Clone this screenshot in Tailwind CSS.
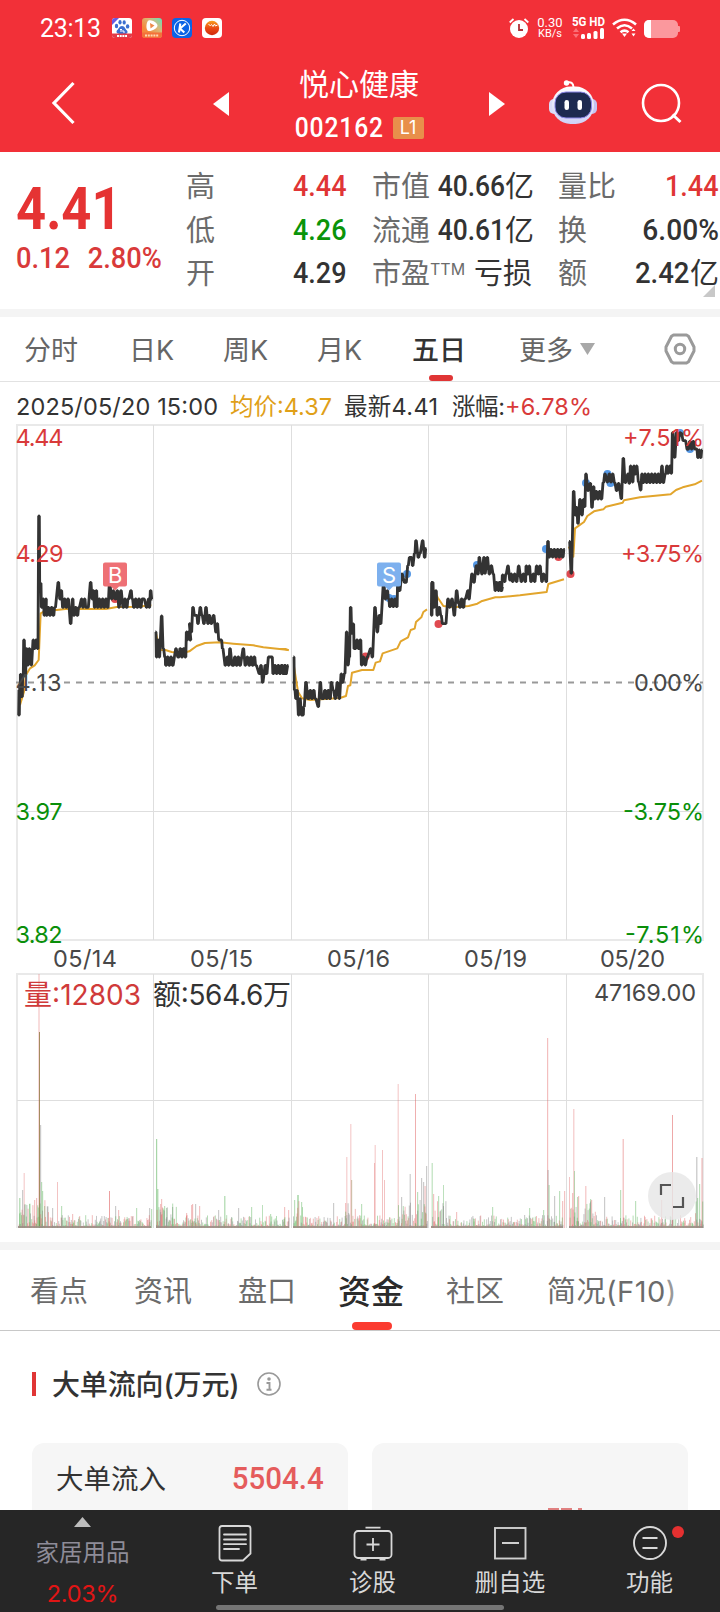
<!DOCTYPE html>
<html lang="zh-CN">
<head>
<meta charset="utf-8">
<title>悦心健康 002162</title>
<script src="https://cdn.jsdelivr.net/npm/@tailwindcss/browser@4"></script>
</head>
<body class="bg-white">
<div class="w-[720px] h-[1612px] overflow-hidden flex flex-col font-['Inter','Noto_Sans_CJK_SC',sans-serif] text-[#333] whitespace-nowrap">

  <!-- status bar -->
  <header class="bg-[#f23038] text-white h-[152px] shrink-0 flex flex-col">
    <div class="h-14 flex items-center pl-[40px] pr-[40px] justify-between">
      <div class="flex items-center">
        <span class="text-[25px] leading-none w-[72px] font-['Roboto'] tracking-[-0.300px]">23:13</span>
        <svg class="w-5 h-5" viewBox="0 0 20 20"><rect width="20" height="20" rx="3" fill="#fff"/><path d="M0 3a3 3 0 0 1 3-3h4L0 7z" fill="#6a5be0"/><g fill="#3b6fd0"><ellipse cx="4.500" cy="8" rx="1.700" ry="2.300"/><ellipse cx="8" cy="4.200" rx="1.600" ry="2.200"/><ellipse cx="12.200" cy="4.400" rx="1.600" ry="2.200"/><ellipse cx="15.600" cy="8.400" rx="1.700" ry="2.200"/><path d="M10 8c3 0 3 3 5 4.500c1.500 2-.5 4-2.500 3.500h-5C5 16 3.800 14 5 12.300C7 11 7 8 10 8z"/></g><path d="M8 11.500h2M9 11v3M11 12v2h2" stroke="#fff" fill="none"/><path d="M0 15.500h20V17a3 3 0 0 1-3 3H3a3 3 0 0 1-3-3z" fill="#e33a48"/><path d="M5 18h10" stroke="#fff" stroke-width="2" stroke-dasharray="2 .7"/></svg>
        <svg class="w-5 h-5 ml-[10px]" viewBox="0 0 20 20"><defs><linearGradient id="vid" x1="0" y1="1" x2="1" y2="0"><stop offset=".3" stop-color="#f6883c"/><stop offset=".65" stop-color="#d9b878"/><stop offset="1" stop-color="#5fe0c0"/></linearGradient></defs><rect width="20" height="20" rx="3" fill="url(#vid)"/><path d="M6.500 2.500c2.500-1.500 9 2 9 5S9.500 13.500 6.500 13S4 4 6.500 2.500z" fill="#fff"/><path d="M8 5l4.500 2.500l-4 3z" fill="#ee8b4a"/><path d="M0 14.500h20V17a3 3 0 0 1-3 3H3a3 3 0 0 1-3-3z" fill="#f4703a"/><path d="M3 17.500h14" stroke="#ffd9b0" stroke-width="2" stroke-dasharray="2 .8"/></svg>
        <svg class="w-5 h-5 ml-[10px]" viewBox="0 0 20 20"><rect width="20" height="20" rx="4" fill="#0b63e6"/><circle cx="10" cy="10" r="7.700" fill="none" stroke="#fff"/><path d="M8.300 5.500L7 14.500M13.800 5.500L8 10.500L12.300 14.500" stroke="#fff" stroke-width="2.100" fill="none"/></svg>
        <svg class="w-5 h-5 ml-[10px]" viewBox="0 0 20 20"><defs><linearGradient id="ball" x1="0" y1="0" x2="0" y2="1"><stop offset="0" stop-color="#f8a020"/><stop offset=".5" stop-color="#ea4c14"/><stop offset="1" stop-color="#d0280c"/></linearGradient></defs><rect width="20" height="20" rx="4" fill="#fff"/><circle cx="10" cy="10" r="7.200" fill="url(#ball)"/><path d="M6.500 6.500l2 1l1-1l1.500 2l1.500-2.500l1 2l2-1" stroke="#fff" stroke-width="1" fill="none"/></svg>
      </div>
      <div class="flex items-center">
        <svg class="w-5 h-5" viewBox="0 0 20 20"><circle cx="10" cy="11" r="9" fill="#fff"/><path d="M.7 4.500L4.500 1M15.500 1l3.800 3.500" stroke="#fff" stroke-width="1.800"/><path d="M10 6v6h4" stroke="#b03038" stroke-width="1.800" fill="none"/></svg>
        <div class="ml-2 w-[26px] text-center font-['Roboto'] flex flex-col items-center leading-[11px] gap-px"><span class="text-[13px]">0.30</span><span class="text-[11px] leading-[10px]">KB/s</span></div>
        <svg class="w-[34px] h-[24px] ml-[9px]" viewBox="0 0 34 24"><text x="0" y="10" font-family="Roboto" font-weight="700" font-size="12" fill="#fff" textLength="33" lengthAdjust="spacingAndGlyphs">5G HD</text><path d="M4 12l3 4H1zM4 22l3-4H1z" fill="#fa7078"/><g fill="#fff"><rect x="9" y="18" width="4" height="5" rx="1.500"/><rect x="15" y="17" width="4" height="6" rx="1.500"/><rect x="21.500" y="15" width="4" height="8" rx="1.500"/><rect x="28" y="12" width="4" height="11" rx="1.500"/></g></svg>
        <svg class="w-[26px] h-5 ml-[6px]" viewBox="0 0 26 20"><g fill="none" stroke="#fff" stroke-width="2.600"><path d="M1 6.500Q12.500-3 24 6.500"/><path d="M5 10.500Q12.500 4 20 10.500"/><path d="M8.500 14.300Q12.500 11 16.500 14.300"/></g><path d="M10 15.500h5l-2.500 3.500zM19.500 13l2-2.500l2 2.500zM19.500 15.500l2 3l2-3z" fill="#fff"/></svg>
        <svg class="w-9 h-[18px] ml-[6px] mt-[2px]" viewBox="0 0 36 18"><rect width="34" height="18" rx="5" fill="#fb989d"/><rect x="33" y="6" width="3" height="6" rx="1" fill="#fb989d"/><path d="M5 0h2v18H5a5 5 0 0 1-5-5V5a5 5 0 0 1 5-5z" fill="#fff"/></svg>
      </div>
    </div>
    <!-- title bar -->
    <div class="h-24 flex items-center">
      <svg class="w-6 h-11 ml-[51px] mb-[3px]" viewBox="0 0 24 44"><path d="M22.500 2L3 22L22.500 42" fill="none" stroke="#fff" stroke-width="3.200"/></svg>
      <svg class="w-4 h-6 ml-[138px]" viewBox="0 0 16 24"><path d="M16 0v24L0 12z" fill="#fff"/></svg>
      <div class="w-[260px] flex flex-col items-center">
        <div class="text-[30px] leading-[44px] h-[54px]">悦心健康</div>
        <div class="flex items-center h-6 gap-[9px] mb-[6px]">
          <span class="text-[28px] leading-6 font-medium font-['Roboto'] tracking-[1px] scale-x-[0.880] origin-right w-[89px] flex justify-end">002162</span>
          <span class="bg-[#e88f4b] rounded-[2px] w-[31px] h-[22px] text-[18px] leading-[22px] text-center">L1</span>
        </div>
      </div>
      <svg class="w-4 h-6" viewBox="0 0 16 24"><path d="M0 0v24L16 12z" fill="#fff"/></svg>
      <svg class="w-12 h-[46px] ml-[44px] mb-[4px]" viewBox="0 0 48 46"><defs><linearGradient id="bot" x1="0" y1="0" x2="0" y2="1"><stop offset="0" stop-color="#fff"/><stop offset="1" stop-color="#cfd0f6"/></linearGradient></defs><path d="M18 3.500Q24 2 24.500 8" fill="none" stroke="#fff" stroke-width="2"/><circle cx="17.500" cy="4" r="2.700" fill="#fff"/><rect x="0" y="20" width="10" height="15" rx="5" fill="#dadcf8"/><rect x="38" y="20" width="10" height="15" rx="5" fill="#c6c4f2"/><rect x="3" y="7.500" width="42" height="37.500" rx="18.500" fill="url(#bot)"/><rect x="6" y="13" width="36.500" height="26" rx="11" fill="#1d2a50" stroke="#8a86e8"/><rect x="15.500" y="21" width="4.500" height="10" rx="2.200" fill="#fff"/><rect x="28.500" y="21" width="4.500" height="10" rx="2.200" fill="#fff"/></svg>
      <svg class="w-[42px] h-[42px] ml-[44px]" viewBox="0 0 42 42"><circle cx="20" cy="20" r="18" fill="none" stroke="#fff" stroke-width="2.600"/><path d="M31.500 31.500L39.500 39" stroke="#fff" stroke-width="3"/></svg>
    </div>
  </header>

  <!-- quote summary -->
  <section class="h-[157px] shrink-0 flex pt-[13px] relative">
    <div class="w-[186px] pl-4 flex flex-col text-[#e53333] font-['Roboto']">
      <span class="text-[59px] leading-[60px] mt-[14px] font-bold origin-left scale-x-[0.890]">4.41</span>
      <span class="text-[29.500px] leading-[34px] mt-[2px] flex gap-[19px] text-[#d93a3a] font-medium origin-left scale-x-[0.925]"><b class="font-medium">0.12</b><b class="font-medium">2.80%</b></span>
    </div>
    <div class="w-[161px] text-[29px] leading-[43.600px] text-[#6b6b6b]">
      <div class="flex justify-between"><span>高</span><b class="font-medium font-['Roboto'] scale-x-[0.930] origin-right text-[#e03535]">4.44</b></div>
      <div class="flex justify-between"><span>低</span><b class="font-medium font-['Roboto'] scale-x-[0.930] origin-right text-[#0a940a]">4.26</b></div>
      <div class="flex justify-between"><span>开</span><b class="font-medium font-['Roboto'] scale-x-[0.930] origin-right text-[#333]">4.29</b></div>
    </div>
    <div class="ml-[25px] w-[162px] text-[29px] leading-[43.600px] text-[#6b6b6b]">
      <div class="flex justify-between"><span>市值</span><span class="text-[#333] flex"><b class="font-medium font-['Roboto'] scale-x-[0.910] origin-right">40.66</b>亿</span></div>
      <div class="flex justify-between"><span>流通</span><span class="text-[#333] flex"><b class="font-medium font-['Roboto'] scale-x-[0.910] origin-right">40.61</b>亿</span></div>
      <div class="flex justify-between"><span class="flex">市盈<i class="not-italic text-[16px] leading-[34px]">TTM</i></span><span class="text-[#333] mr-[2px]">亏损</span></div>
    </div>
    <div class="ml-[24px] w-[161px] text-[29px] leading-[43.600px] text-[#6b6b6b]">
      <div class="flex justify-between"><span>量比</span><b class="font-medium font-['Roboto'] scale-x-[0.930] origin-right text-[#e03535]">1.44</b></div>
      <div class="flex justify-between"><span>换</span><b class="font-medium font-['Roboto'] scale-x-[0.970] origin-right text-[#333]">6.00%</b></div>
      <div class="flex justify-between"><span>额</span><span class="text-[#333] flex"><b class="font-medium font-['Roboto'] scale-x-[0.950] origin-right">2.42</b>亿</span></div>
    </div>
    <svg class="absolute right-[5px] top-[133px] w-3 h-3" viewBox="0 0 12 12"><path d="M12 0v12H0z" fill="#c8c8c8"/></svg>
  </section>
  <div class="h-2 shrink-0 bg-[#f4f4f4]"></div>

  <!-- period tabs -->
  <nav class="h-[65px] shrink-0 border-b border-[#e2e2e2] flex items-center text-[27px] leading-[40px] text-[#666]">
    <span class="ml-[24px] w-[105px] pt-1">分时</span>
    <span class="w-[94px] pt-1">日K</span>
    <span class="w-[94px] pt-1">周K</span>
    <span class="w-[95px] pt-1">月K</span>
    <span class="w-[107px] pt-1 h-full flex items-center relative text-[#333] font-medium">五日<i class="absolute left-[17px] bottom-0 w-6 h-[6px] rounded-full bg-[#e03535]"></i></span>
    <span class="w-[61px] pt-1">更多</span>
    <svg class="w-[15px] h-3" viewBox="0 0 15 12"><path d="M0 0h15L7.500 12z" fill="#a8a8a8"/></svg>
    <svg class="w-8 h-8 ml-[69px]" viewBox="0 0 32 32"><path d="M9.500 2h13l2 1.200L30 14v4l-5.500 10.800L22.500 30h-13l-2-1.200L2 18v-4L7.500 3.200z" fill="none" stroke="#9a9a9a" stroke-width="3" stroke-linejoin="round"/><circle cx="16" cy="16" r="4.700" fill="none" stroke="#9a9a9a" stroke-width="3"/></svg>
  </nav>

  <!-- charts -->
  <svg class="w-[720px] h-[860px] shrink-0" viewBox="0 382 720 860" font-size="23.500" fill="#484848">
    <g fill="#333">
      <text x="16" y="415" textLength="202">2025/05/20 15:00</text>
      <text x="230" y="415" textLength="102" fill="#e0a018">均价:4.37</text>
      <text x="344" y="415" textLength="94">最新4.41</text>
      <text x="452" y="415" textLength="53">涨幅:</text>
      <text x="505" y="415" textLength="87" fill="#d93a3a">+6.78%</text>
    </g>
    <g fill="none" stroke="#e9e9e9" stroke-width="2">
      <rect x="17" y="425" width="686" height="515"/>
      <path d="M16 974H704M17 974V1228M703 974V1228"/>
    </g>
    <path d="M17 553.500H703M17 811.500H703M17 1100.500H703M153.500 425V940M291.500 425V940M428.500 425V940M566.500 425V940M153.500 974V1228M291.500 974V1228M428.500 974V1228M566.500 974V1228" stroke="#dedede" fill="none"/>
    <path d="M16 682.500H703" stroke="#999" stroke-width="2" stroke-dasharray="6 6"/>
    <g id="volume"></g>
    <g fill="none" stroke="#e2a52c" stroke-linejoin="round">
      <path transform="translate(0 420) scale(.33333)" stroke-width="6" d="M60 855L72 815L78 765L90 745L104 736L116 720L122 580L140 570H170L196 567H318L350 561L410 560L454 556M468 640L480 690H496L515 696L545 700L568 694L590 678L615 669L660 667L700 671L760 676L790 682L866 690"/>
      <path transform="translate(280 420) scale(.33333)" stroke-width="6" d="M0 687H16L26 691M42 740L54 815L66 835L90 840L180 834L198 828L204 798L211 796L216 758L246 750H280L287 728L300 724L308 700L352 685L362 664L384 652L392 630L404 626L408 606L424 592L430 576L441 568M455 500L474 534L490 558L520 562L566 558L592 551L604 544L646 532H660"/>
      <path transform="translate(500 400) scale(.33333)" stroke-width="6" d="M0 592L60 586L140 576L145 552L192 538M206 440L220 470L225 385L252 366L262 348L282 334L310 328L318 320L368 308L372 301L420 292L512 283L528 270L548 262L584 253L606 242"/>
    </g>
    <g fill="#5497e4"><circle cx="389" cy="598" r="4"/><circle cx="394" cy="599" r="4"/><circle cx="407" cy="574" r="4"/><circle cx="477" cy="565" r="4"/><circle cx="546" cy="549" r="4"/><circle cx="586" cy="483" r="4"/><circle cx="607.500" cy="474" r="4"/><circle cx="610.500" cy="483" r="4"/><circle cx="680" cy="433" r="4"/><circle cx="690" cy="449" r="4"/></g>
    <g fill="#e04a50"><circle cx="115" cy="599" r="4"/><circle cx="365.500" cy="656.500" r="4"/><circle cx="438.500" cy="624" r="4"/><circle cx="570.500" cy="557" r="4" transform="translate(-12 0)"/><circle cx="570.500" cy="574" r="4"/></g>
    <g id="price" fill="none" stroke="#333"></g>
    <path d="M105 562.500h20a2 2 0 0 1 2 2v20a2 2 0 0 1-2 2h-6l-4 4l-4-4h-6a2 2 0 0 1-2-2v-20a2 2 0 0 1 2-2z" fill="#ee7075"/>
    <text x="108" y="583" font-size="22" fill="#fff">B</text>
    <path d="M379 562.500h20a2 2 0 0 1 2 2v20a2 2 0 0 1-2 2h-6l-4 4l-4-4h-6a2 2 0 0 1-2-2v-20a2 2 0 0 1 2-2z" fill="#7db0ee"/>
    <text x="382" y="583" font-size="22" fill="#fff">S</text>
    <g fill="#d93a3a"><text x="15.500" y="446" textLength="48">4.44</text><text x="15.500" y="562" textLength="48">4.29</text><text x="623" y="446" textLength="81">+7.51%</text><text x="621" y="562" textLength="83">+3.75%</text></g>
    <text x="15.500" y="691" textLength="46">4.13</text><text x="634" y="691" textLength="70">0.00%</text>
    <g fill="#0a8f0a"><text x="15.500" y="820" textLength="47">3.97</text><text x="15.500" y="943" textLength="47">3.82</text><text x="623" y="820" textLength="81">-3.75%</text><text x="625" y="943" textLength="79">-7.51%</text></g>
    <g><text x="53" y="967" textLength="64">05/14</text><text x="190" y="967" textLength="63">05/15</text><text x="327" y="967" textLength="63">05/16</text><text x="464" y="967" textLength="63">05/19</text><text x="600" y="967" textLength="65">05/20</text></g>
    <g font-size="28"><text x="24" y="1005" textLength="117" fill="#d03a3a">量:12803</text><text x="153" y="1005" textLength="138" fill="#333">额:564.6万</text></g>
    <text x="594" y="1001" textLength="102">47169.00</text>
    <circle cx="672" cy="1196" r="24" fill="#e6e6e6" fill-opacity=".8"/>
    <path d="M661 1195v-10h10M673 1207h10v-10" fill="none" stroke="#555" stroke-width="2.200"/>
  </svg>
  <div class="h-2 shrink-0 bg-[#f4f4f4]"></div>

  <!-- detail tabs -->
  <nav class="h-[81px] shrink-0 border-b border-[#c8c8c8] flex items-center text-[29px] leading-[44px] text-[#6b6b6b]">
    <span class="ml-[30px] w-[104px] pt-1">看点</span>
    <span class="w-[104px] pt-1">资讯</span>
    <span class="w-[100px] pt-1">盘口</span>
    <span class="w-[108px] pt-1 h-full flex items-center relative text-[33px] text-[#2b2b2b] font-medium">资金<i class="absolute left-[14px] bottom-0 w-10 h-2 rounded-full bg-[#fb3b30]"></i></span>
    <span class="w-[101px] pt-1">社区</span>
    <span class="tracking-[0.500px] pt-1">简况(F10<i class="not-italic text-[#999]">)</i></span>
  </nav>

  <!-- large order flow -->
  <section class="h-[179px] shrink-0 overflow-hidden px-8 flex flex-col">
    <h2 class="h-[106px] mb-[6px] flex items-center shrink-0 text-[28px] font-medium">
      <i class="w-1 h-6 bg-[#e03535]"></i><span class="ml-4 mt-[2px] tracking-[-0.150px]">大单流向(万元)</span>
      <svg class="w-6 h-6 ml-[18px]" viewBox="0 0 24 24"><circle cx="12" cy="12" r="11" fill="none" stroke="#999" stroke-width="1.600"/><circle cx="12" cy="7" r="1.800" fill="#999"/><path d="M9.500 11H12.500V17.500M9.500 17.800h5" fill="none" stroke="#999" stroke-width="1.900"/></svg>
    </h2>
    <div class="flex gap-6 grow">
      <div class="w-[316px] h-[100px] rounded-xl bg-[#f6f6f6] flex justify-between pl-[24px] pr-[24px] pt-px leading-[70px] text-[27.500px]"><span>大单流入</span><b class="font-medium text-[31px] font-['Roboto'] text-[#e55c5c] scale-x-[0.950] origin-right">5504.4</b></div>
      <div class="w-[316px] h-[67px] rounded-t-xl bg-[#f6f6f6] flex items-end gap-[2px] pl-[176px]"><i class="w-[11px] h-[2px] bg-[#e08080]"></i><i class="w-[11px] h-[2px] bg-[#e08080]"></i><i class="w-1 h-[2px] ml-1 bg-[#e08080]"></i></div>
    </div>
  </section>

  <!-- bottom toolbar -->
  <footer class="h-[102px] shrink-0 bg-[#262626] flex relative text-[23.500px] leading-none text-[#d8d8d8]">
    <div class="w-[165px] flex flex-col items-center pt-[7px] text-[#8e8c98]">
      <svg class="w-[17px] h-[10px]" viewBox="0 0 17 10"><path d="M8.500 0L17 10H0z" fill="#bdbdbd"/></svg>
      <span class="mt-[14px]">家居用品</span>
      <span class="mt-[17px] text-[#e01515] tracking-[-0.300px]">2.03%</span>
    </div>
    <div class="w-[139px] flex flex-col items-center pt-[14px]">
      <svg class="w-9 h-[38px]" viewBox="0 0 36 38"><path d="M5 2h26q2.500 0 2.500 2.500V29.500L26 36.500H5q-2.500 0-2.500-2.500V4.500Q2.500 2 5 2z" fill="none" stroke="#d8d8d8" stroke-width="1.800"/><path d="M7 10.500h22M7 15.500h22M7 20.200h22M7 25h15" stroke="#d8d8d8" stroke-width="1.800" stroke-linecap="round"/></svg>
      <span class="mt-[9px]">下单</span>
    </div>
    <div class="w-[137px] flex flex-col items-center pt-[14px]">
      <svg class="w-10 h-[38px]" viewBox="0 0 40 38"><rect x="1.500" y="7" width="37" height="27" rx="3.500" fill="none" stroke="#d8d8d8" stroke-width="1.800"/><path d="M12.500 3.700h15M20 14v13M13.500 20.500h13" stroke="#d8d8d8" stroke-width="1.800"/><path d="M7.500 35.500h6M26.500 35.500h6" stroke="#d8d8d8" stroke-width="2"/></svg>
      <span class="mt-[9px]">诊股</span>
    </div>
    <div class="w-[138px] flex flex-col items-center pt-[14px]">
      <svg class="w-9 h-[38px]" viewBox="0 0 36 38"><rect x="3" y="4" width="30.500" height="30.500" fill="none" stroke="#cfcfcf" stroke-width="1.900"/><path d="M10 19h17" stroke="#d8d8d8" stroke-width="1.900"/></svg>
      <span class="mt-[9px]">删自选</span>
    </div>
    <div class="w-[141px] flex flex-col items-center pt-[14px] relative">
      <svg class="w-9 h-[38px]" viewBox="0 0 36 38"><circle cx="18" cy="19" r="16" fill="none" stroke="#d8d8d8" stroke-width="1.900"/><path d="M10.500 14h15M10.500 24h15" stroke="#d8d8d8" stroke-width="1.900"/></svg>
      <span class="mt-[9px]">功能</span>
      <i class="absolute left-[93px] top-4 w-3 h-3 rounded-full bg-[#e53030]"></i>
    </div>
    <i class="absolute left-[216px] bottom-[2px] w-[288px] h-[5px] rounded-full bg-[#757575]"></i>
  </footer>
</div>

<script>
const NS = 'http://www.w3.org/2000/svg';

// [x, y] is a point; [x0, x1, high, low] is a stretch of rapid ticks between two price levels.
const days = [
  {t:'translate(0 420) scale(.33333)', p:[[56,810],[57,885],[60,800],[62,763],[66,830],[69,763],[72,660],[76,761],[80,686],[84,735],[88,686],[94,735],[100,660],[104,686],[108,660],[113,686],[117,288],[120,490],[122,490],[125,562],[130,537],[133,586],[138,537],[140,168,562,586],[175,487],[180,537],[184,512],[189,205,537,562],[212,611],[218,537],[222,240,562,586],[245,537],[249,562],[254,537],[258,562],[264,562],[272,487],[277,537],[280,512],[284,562],[289,512],[293,325,537,562],[329,487],[335,537],[340,512],[346,537],[352,512],[357,562],[363,512],[370,388,537,562],[393,512],[397,537],[402,428,537,562],[432,537],[440,562],[446,537],[448,562],[452,512],[456,537]]},
  {t:'translate(0 420) scale(.33333)', p:[[467,636],[470,711],[474,660],[478,711],[485,588],[490,686],[495,711],[498,522,711,736],[528,686],[534,711],[536,556,686,711],[560,636],[561,574,636,660],[569,611],[574,636],[579,562],[584,586],[590,586],[594,611],[601,562],[606,586],[612,611],[618,562],[624,611],[628,586],[634,611],[641,586],[648,636],[652,611],[657,660],[664,660],[668,686],[676,736],[682,711],[686,736],[690,686],[697,736],[700,724,711,736],[730,686],[736,736],[742,711],[748,772,711,736],[778,761],[783,736],[788,787],[796,736],[800,761],[806,711],[816,711],[820,864,736,761]]},
  {t:'translate(280 420) scale(.33333)', p:[[0,761],[6,736],[10,761],[14,736],[18,761],[24,736]]},
  {t:'translate(280 420) scale(.33333)', p:[[41,711],[44,810],[48,836],[51,811],[56,885],[60,836],[65,885],[69,885],[72,860],[78,787],[84,836],[86,110,811,836],[115,860],[121,787],[126,836],[130,150,811,836],[154,787],[160,811],[166,836],[172,787],[178,836],[184,762],[188,787],[194,760],[200,636],[204,735],[208,711],[212,562],[216,640],[220,612],[223,686],[226,241,660,686],[245,735],[250,711],[256,735],[262,711],[272,686],[277,711],[285,562],[292,636],[298,586],[302,611],[311,487],[316,537],[322,512],[326,537],[330,352,537,560],[354,462],[359,512],[366,462],[374,487],[378,487],[384,437],[389,412],[394,412],[398,437],[404,400],[408,362],[415,412],[420,400],[428,362],[434,412],[438,385]]},
  {t:'translate(280 420) scale(.33333)', p:[[454,487],[455,586],[458,487],[462,562],[468,512],[472,586],[478,562],[483,586],[488,611],[497,611],[504,537],[509,562],[516,537],[523,586],[530,512],[536,550],[540,558,537,562],[564,512],[567,537],[576,462],[582,487],[589,437],[594,462],[598,412],[606,462],[612,412],[615,460],[622,412],[628,462],[634,437],[640,462],[646,512],[650,487],[656,512],[658,487],[664,512],[668,500]]},
  {t:'translate(500 400) scale(.33333)', p:[[0,547],[4,572],[8,525],[14,545],[18,522],[24,498],[30,540],[34,522],[38,545],[44,522],[50,545],[56,498],[64,545],[70,522],[76,545],[79,498],[84,522],[88,498],[93,545],[100,522],[104,545],[110,498],[115,522],[120,498],[126,545],[131,522],[139,545],[144,424],[148,195,448,471]]},
  {t:'translate(500 400) scale(.33333)', p:[[208,424],[214,520],[221,274],[226,345],[230,322],[234,370],[240,298],[246,345],[251,298],[254,320],[258,222],[264,272],[271,250],[276,322],[281,260],[284,304,274,297],[310,248],[315,222],[322,246],[328,222],[333,246],[338,222],[344,248],[350,272],[356,250],[364,296],[370,175],[376,248],[384,222],[388,250],[392,198],[398,246],[402,198],[406,222],[410,198],[416,246],[422,270],[426,222],[430,482,222,248],[486,198],[490,248],[496,222],[501,198],[504,220],[510,198],[514,220],[518,98],[524,172],[530,98],[535,122],[540,98],[544,100],[550,122],[556,122],[562,148],[565,586,124,147],[590,147],[594,173],[598,150],[602,173],[606,150]]}
];
for (const d of days) {
  const pts = [];
  for (const s of d.p) {
    if (s.length === 2) pts.push([s[0] - 1, s[1]], [s[0] + 1, s[1]]);
    else for (let x = s[0], i = 0; x <= s[1]; x += 5, i++) {
      const y = i % 2 ? s[2] : s[3];
      pts.push([x - 1.5, y], [x + 1.5, y]);
    }
  }
  const e = document.createElementNS(NS, 'polyline');
  e.setAttribute('points', pts.join(' '));
  e.setAttribute('transform', d.t);
  e.setAttribute('stroke-width', '8.5');
  e.setAttribute('stroke-linejoin', 'bevel');
  document.getElementById('price').appendChild(e);
}

// Volume: [x, height, colour, width, opacity]
const R = '#e06060', G = '#4fae4f', K = '#777';
const vol = document.getElementById('volume');
function bar(x, h, c, w, o) {
  const e = document.createElementNS(NS, 'rect');
  e.setAttribute('x', x); e.setAttribute('y', 1228 - h);
  e.setAttribute('width', w || 1.2); e.setAttribute('height', h);
  e.setAttribute('fill', c); e.setAttribute('fill-opacity', o || .38);
  vol.appendChild(e);
}
[[38,254,R,2,.22],[39,196,'#8f7740',1,.8],[40,103,K],[19,30,G,1.5],[23.5,55,R,1.5,.25],[22,38,K],[29,24,G],[34,28,R],[36,30,R],[41,46,G],[42,37,G],[44,22,G],[52,20,K],[57,46,R,1],[61,22,G],[72,14,R],[109,37,R,1,.6],[115,22,K],[118,18,R],[136,20,G],[149,20,K],[151,19,G],
[156,89,G,1.2,.5],[157,39,G,1.5],[160,24,R],[161,29,R],[164,22,G],[166,20,G],[172,21,K],[186,15,R],[191,23,R],[192,24,R],[195,24,K],[199,22,R],[218,18,K],[224,32,G,1.5],[238,20,K],[251,21,G],[262,23,G,1],[270,14,G],[284,21,R],[288,18,R],
[294,28,G],[297,33,G,2],[301,26,G],[333,25,K],[346,71,R,1.5,.25],[350,104,R,1.5,.25],[351,48,'#8f7740'],[345,25,R],[361,24,G],[374,65,R,1],[374.5,83,R,1.5,.25],[382,78,R,1],[384,48,R,1],[397.5,144,R,1.5,.25],[415,134,R,1,.5],[409.5,54,K,1.5,.3],[401,31,K],[421,50,K],[423,46,K],[417,36,G],[426,62,K],[424.5,42,R],
[431.5,65,G,1.5,.3],[433,34,R],[438,32,G],[443,43,G,1],[456,16,R],[492,21,G],[529,20,G],[547,190,R,1.2,.4],[547.5,58,K],[548.5,43,G],[543,18,G],[554,32,K],[559,37,G],[562,27,R],[564,37,R],[524,13,K],
[569,51,R,1],[573,119,R,1.5,.28],[574,57,G,1],[572,35,R],[577,31,G],[578,32,R],[585,42,R,1.5,.3],[590,29,G],[591,28,R],[604,31,K],[620,38,G],[622.5,89,R,1.5,.35],[635,27,G],[672,113,R,1,.55],[661,28,R],[696,71,K,1.5,.35],[701,70,R,2,.25],[699,44,G],[697,30,G]
].forEach(b => bar(...b));
let seed = 7;
const rnd = () => (seed = (seed * 16807) % 2147483647) / 2147483647;
const busy = x => (x < 50 || (x > 155 && x < 178) || (x > 294 && x < 304) || (x > 345 && x < 356) || (x > 398 && x < 428) || (x > 431 && x < 446) || (x > 569 && x < 595) || x > 694) ? 26 : 11;
for (const [a, b] of [[18,151],[156,289],[293,427],[431,563],[569,703]]) {
  for (let x = a; x < b; x += .6) {
    const r = rnd(), c = rnd();
    bar(x, 2 + Math.pow(r, 2.3) * busy(x), c < .36 ? R : c < .7 ? G : K, 1, .42);
  }
  bar(a, 2, '#9a8c84', b - a, .8);
}
</script>
</body>
</html>
